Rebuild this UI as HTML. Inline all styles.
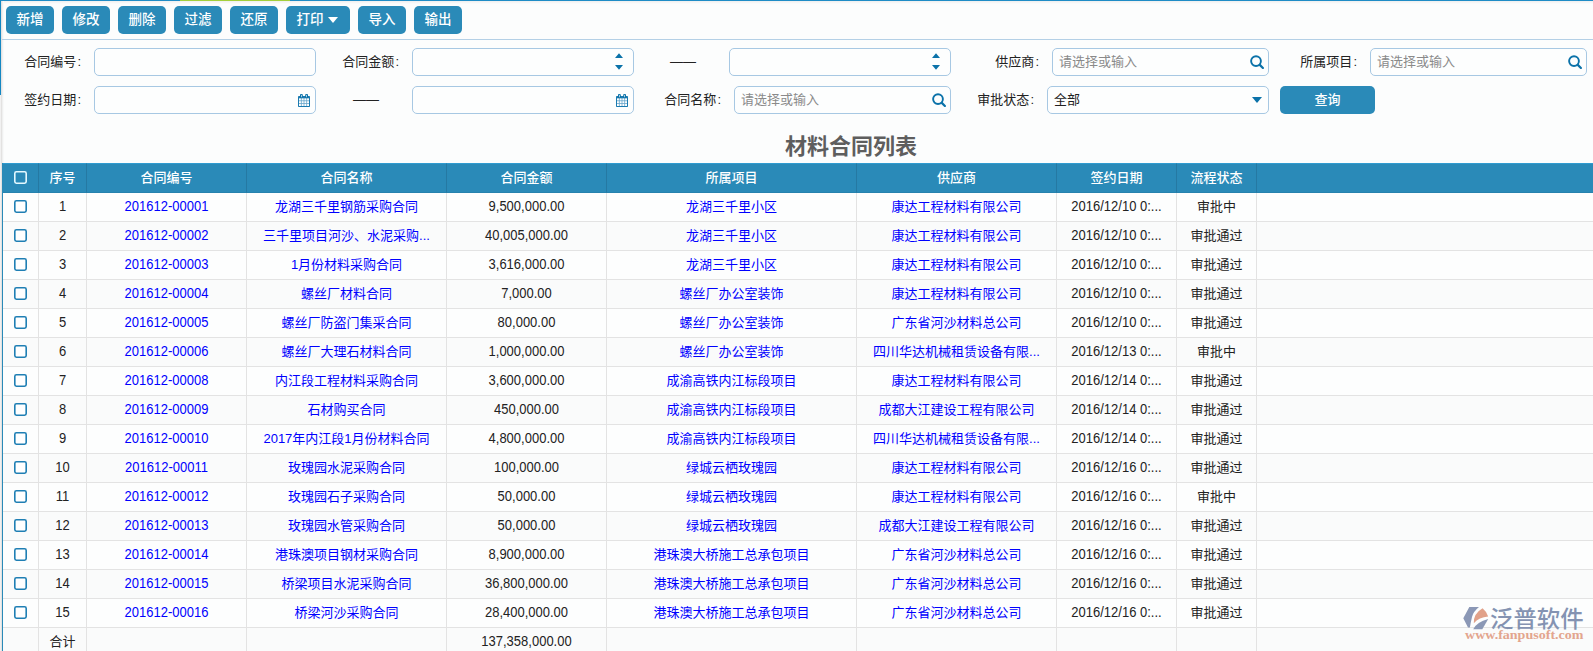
<!DOCTYPE html>
<html lang="zh-CN">
<head>
<meta charset="utf-8">
<title>材料合同列表</title>
<style>
*{box-sizing:border-box;margin:0;padding:0}
html,body{width:1593px;height:651px;overflow:hidden;background:#fcfdfd}
body{font-family:"Liberation Sans","Noto Sans CJK SC",sans-serif;font-size:13px;color:#222;position:relative}
.abs{position:absolute}
#topline{left:0;top:0;width:1593px;height:1px;background:#1f8cc6}
#topgreen{left:180px;top:0;width:110px;height:1px;background:#a4cf3c}
#leftblue{left:0;top:0;width:1px;height:95px;background:#1487c2}
#leftgrey{left:0;top:95px;width:1px;height:556px;background:#f1f1f1}
#leftgrey2{left:1px;top:1px;width:3px;height:650px;background:linear-gradient(90deg,#e3e2e1 0,#e3e2e1 33%,#eff0f0 34%,#eff0f0 66%,#f8f9f9 67%)}
#topshade{left:1px;top:1px;width:1592px;height:3px;background:linear-gradient(180deg,#efefef,#fcfdfd)}
#tblleft{left:2px;top:163px;width:1px;height:488px;background:#2a8ab8}
#tbsep{left:2px;top:39px;width:1591px;height:1px;background:#b4d0e6}
.btn{font-weight:500;position:absolute;top:6px;height:28px;width:48px;background:#2a8ab8;color:#fff;border-radius:5px;font-size:13.5px;line-height:27px;text-align:center;white-space:nowrap}
.lbl i{font-style:normal;margin-left:1px}
.lbl{position:absolute;height:28px;line-height:28px;font-size:13px;color:#222;text-align:right;white-space:nowrap}
.inp{position:absolute;height:28px;border:1px solid #a7c8e3;border-radius:5px;background:#fdfefe;font-size:13px;line-height:26px;color:#8a8a8a;padding-left:6px;white-space:nowrap}
.dash{position:absolute;width:26px;height:28px;line-height:28px;font-size:13px;color:#222;white-space:nowrap;text-align:center}
#title{left:600px;top:132px;width:502px;height:30px;line-height:30px;text-align:center;font-size:22px;font-weight:bold;color:#5e5e5e}
table{position:absolute;left:3px;top:163px;border-collapse:separate;border-spacing:0;table-layout:fixed;width:1590px}
th{height:30px;background:#2a8ab8;color:#fff;font-weight:500;border-top:1px solid #2f9bd0;border-bottom:1px solid #2682ae;font-size:13px;border-right:1px solid #2579a3;text-align:center;white-space:nowrap;padding:0 0 3px 0}
td{height:29px;border-right:1px solid #e3e3e3;border-bottom:1px solid #e3e3e3;text-align:center;font-size:13px;color:#222;white-space:nowrap;overflow:hidden;padding:0 0 4px 0;background:#fdfefe}
tr.alt td{background:#fafbfb}
td.lk{color:#0000ff}
td .n{display:inline-block;transform:translateY(0.7px) scaleY(1.12);transform-origin:50% 55%}
th:last-child,td:last-child{border-right:none}
.cb{display:inline-block;vertical-align:middle;position:relative;left:0.4px}
</style>
</head>
<body>
<div class="abs" id="topline"></div>
<div class="abs" id="topgreen"></div>
<div class="abs" id="leftblue"></div>
<div class="abs" id="topshade"></div>
<div class="abs" id="leftgrey2"></div>
<div class="abs" id="leftgrey"></div>
<div class="abs" id="tbsep"></div>

<div class="btn" style="left:6px">新增</div>
<div class="btn" style="left:62px">修改</div>
<div class="btn" style="left:118px">删除</div>
<div class="btn" style="left:174px">过滤</div>
<div class="btn" style="left:230px">还原</div>
<div class="btn" style="left:286px;width:64px;text-align:left;padding-left:10.5px">打印<svg width="10" height="6" viewBox="0 0 10 6" style="position:absolute;left:42px;top:11px"><path d="M0 0h10L5 6z" fill="#fff"/></svg></div>
<div class="btn" style="left:358px">导入</div>
<div class="btn" style="left:414px">输出</div>

<div class="lbl" style="left:-19px;width:100px;top:48px">合同编号<i>:</i></div>
<div class="inp" style="left:94px;top:48px;width:222px"></div>
<div class="lbl" style="left:299px;width:100px;top:48px">合同金额<i>:</i></div>
<div class="inp" style="left:412px;top:48px;width:222px"><svg class="abs spn" style="right:10.3px;top:4px" width="8" height="18" viewBox="0 0 8 18"><path d="M4 0.3L8 4.9H0z M4 16.7L8 12H0z" fill="#0b72a9"/></svg></div>
<div class="dash" style="left:670px;top:48px">——</div>
<div class="inp" style="left:729px;top:48px;width:222px"><svg class="abs spn" style="right:10.3px;top:4px" width="8" height="18" viewBox="0 0 8 18"><path d="M4 0.3L8 4.9H0z M4 16.7L8 12H0z" fill="#0b72a9"/></svg></div>
<div class="lbl" style="left:939px;width:100px;top:48px">供应商<i>:</i></div>
<div class="inp" style="left:1052px;top:48px;width:217px">请选择或输入<svg class="abs mag" style="right:4px;top:6px" width="14" height="14" viewBox="0 0 14 14"><circle cx="6" cy="6.1" r="4.9" fill="none" stroke="#0b72a9" stroke-width="1.9"/><path d="M9.8 9.9L12.9 13" stroke="#0b72a9" stroke-width="2.2" stroke-linecap="round"/></svg></div>
<div class="lbl" style="left:1257px;width:100px;top:48px">所属项目<i>:</i></div>
<div class="inp" style="left:1370px;top:48px;width:217px">请选择或输入<svg class="abs mag" style="right:4px;top:6px" width="14" height="14" viewBox="0 0 14 14"><circle cx="6" cy="6.1" r="4.9" fill="none" stroke="#0b72a9" stroke-width="1.9"/><path d="M9.8 9.9L12.9 13" stroke="#0b72a9" stroke-width="2.2" stroke-linecap="round"/></svg></div>

<div class="lbl" style="left:-19px;width:100px;top:86px">签约日期<i>:</i></div>
<div class="inp" style="left:94px;top:86px;width:222px"><svg class="abs cal" style="right:5px;top:7px" width="12" height="13" viewBox="0 0 12 13"><rect x="0" y="2" width="12" height="11" rx="0.8" fill="#1a7ab0"/><rect x="2" y="0" width="2.8" height="4" rx="0.9" fill="#0b72a9"/><rect x="7.2" y="0" width="2.8" height="4" rx="0.9" fill="#0b72a9"/><rect x="3" y="0.9" width="0.8" height="2.3" fill="#cfe3f0"/><rect x="8.2" y="0.9" width="0.8" height="2.3" fill="#cfe3f0"/><rect x="1" y="4.4" width="10" height="7.6" fill="#6aa7cc"/><rect x="1.00" y="4.40" width="1.9" height="2.0" fill="#fdfefe"/><rect x="3.70" y="4.40" width="1.9" height="2.0" fill="#fdfefe"/><rect x="6.40" y="4.40" width="1.9" height="2.0" fill="#fdfefe"/><rect x="9.10" y="4.40" width="1.9" height="2.0" fill="#fdfefe"/><rect x="1.00" y="7.20" width="1.9" height="2.0" fill="#fdfefe"/><rect x="3.70" y="7.20" width="1.9" height="2.0" fill="#fdfefe"/><rect x="6.40" y="7.20" width="1.9" height="2.0" fill="#fdfefe"/><rect x="9.10" y="7.20" width="1.9" height="2.0" fill="#fdfefe"/><rect x="1.00" y="10.00" width="1.9" height="2.0" fill="#fdfefe"/><rect x="3.70" y="10.00" width="1.9" height="2.0" fill="#fdfefe"/><rect x="6.40" y="10.00" width="1.9" height="2.0" fill="#fdfefe"/><rect x="9.10" y="10.00" width="1.9" height="2.0" fill="#fdfefe"/></svg></div>
<div class="dash" style="left:353px;top:86px">——</div>
<div class="inp" style="left:412px;top:86px;width:222px"><svg class="abs cal" style="right:5px;top:7px" width="12" height="13" viewBox="0 0 12 13"><rect x="0" y="2" width="12" height="11" rx="0.8" fill="#1a7ab0"/><rect x="2" y="0" width="2.8" height="4" rx="0.9" fill="#0b72a9"/><rect x="7.2" y="0" width="2.8" height="4" rx="0.9" fill="#0b72a9"/><rect x="3" y="0.9" width="0.8" height="2.3" fill="#cfe3f0"/><rect x="8.2" y="0.9" width="0.8" height="2.3" fill="#cfe3f0"/><rect x="1" y="4.4" width="10" height="7.6" fill="#6aa7cc"/><rect x="1.00" y="4.40" width="1.9" height="2.0" fill="#fdfefe"/><rect x="3.70" y="4.40" width="1.9" height="2.0" fill="#fdfefe"/><rect x="6.40" y="4.40" width="1.9" height="2.0" fill="#fdfefe"/><rect x="9.10" y="4.40" width="1.9" height="2.0" fill="#fdfefe"/><rect x="1.00" y="7.20" width="1.9" height="2.0" fill="#fdfefe"/><rect x="3.70" y="7.20" width="1.9" height="2.0" fill="#fdfefe"/><rect x="6.40" y="7.20" width="1.9" height="2.0" fill="#fdfefe"/><rect x="9.10" y="7.20" width="1.9" height="2.0" fill="#fdfefe"/><rect x="1.00" y="10.00" width="1.9" height="2.0" fill="#fdfefe"/><rect x="3.70" y="10.00" width="1.9" height="2.0" fill="#fdfefe"/><rect x="6.40" y="10.00" width="1.9" height="2.0" fill="#fdfefe"/><rect x="9.10" y="10.00" width="1.9" height="2.0" fill="#fdfefe"/></svg></div>
<div class="lbl" style="left:621px;width:100px;top:86px">合同名称<i>:</i></div>
<div class="inp" style="left:734px;top:86px;width:217px">请选择或输入<svg class="abs mag" style="right:4px;top:6px" width="14" height="14" viewBox="0 0 14 14"><circle cx="6" cy="6.1" r="4.9" fill="none" stroke="#0b72a9" stroke-width="1.9"/><path d="M9.8 9.9L12.9 13" stroke="#0b72a9" stroke-width="2.2" stroke-linecap="round"/></svg></div>
<div class="lbl" style="left:934px;width:100px;top:86px">审批状态<i>:</i></div>
<div class="inp" style="left:1047px;top:86px;width:222px;color:#222">全部<svg class="abs" style="right:6px;top:10px" width="10" height="6" viewBox="0 0 10 6"><path d="M0 0h10L5 6z" fill="#0b72a9"/></svg></div>
<div class="btn" style="left:1280px;top:86px;width:95px;height:28px;line-height:27px;font-size:13px">查询</div>

<div class="abs" id="title">材料合同列表</div>

<table>
<colgroup><col style="width:36px"><col style="width:48px"><col style="width:160px"><col style="width:200px"><col style="width:160px"><col style="width:250px"><col style="width:200px"><col style="width:120px"><col style="width:80px"><col></colgroup>
<thead><tr><th><svg class="cb" width="13" height="13" viewBox="0 0 13 13"><rect x="0.8" y="0.8" width="11.4" height="11.400" rx="1.6" fill="none" stroke="#e4f9ff" stroke-width="1.600"/></svg></th><th>序号</th><th>合同编号</th><th>合同名称</th><th>合同金额</th><th>所属项目</th><th>供应商</th><th>签约日期</th><th>流程状态</th><th></th></tr></thead>
<tbody>
<tr><td><svg class="cb" width="13" height="13" viewBox="0 0 13 13"><rect x="0.8" y="0.8" width="11.4" height="11.400" rx="1.6" fill="#fff" stroke="#1f7fb4" stroke-width="1.600"/></svg></td><td><span class="n">1</span></td><td class="lk"><span class="n">201612-00001</span></td><td class="lk">龙湖三千里钢筋采购合同</td><td><span class="n">9,500,000.00</span></td><td class="lk">龙湖三千里小区</td><td class="lk">康达工程材料有限公司</td><td><span class="n">2016/12/10 0:...</span></td><td>审批中</td><td></td></tr>
<tr class="alt"><td><svg class="cb" width="13" height="13" viewBox="0 0 13 13"><rect x="0.8" y="0.8" width="11.4" height="11.400" rx="1.6" fill="#fff" stroke="#1f7fb4" stroke-width="1.600"/></svg></td><td><span class="n">2</span></td><td class="lk"><span class="n">201612-00002</span></td><td class="lk">三千里项目河沙、水泥采购...</td><td><span class="n">40,005,000.00</span></td><td class="lk">龙湖三千里小区</td><td class="lk">康达工程材料有限公司</td><td><span class="n">2016/12/10 0:...</span></td><td>审批通过</td><td></td></tr>
<tr><td><svg class="cb" width="13" height="13" viewBox="0 0 13 13"><rect x="0.8" y="0.8" width="11.4" height="11.400" rx="1.6" fill="#fff" stroke="#1f7fb4" stroke-width="1.600"/></svg></td><td><span class="n">3</span></td><td class="lk"><span class="n">201612-00003</span></td><td class="lk">1月份材料采购合同</td><td><span class="n">3,616,000.00</span></td><td class="lk">龙湖三千里小区</td><td class="lk">康达工程材料有限公司</td><td><span class="n">2016/12/10 0:...</span></td><td>审批通过</td><td></td></tr>
<tr class="alt"><td><svg class="cb" width="13" height="13" viewBox="0 0 13 13"><rect x="0.8" y="0.8" width="11.4" height="11.400" rx="1.6" fill="#fff" stroke="#1f7fb4" stroke-width="1.600"/></svg></td><td><span class="n">4</span></td><td class="lk"><span class="n">201612-00004</span></td><td class="lk">螺丝厂材料合同</td><td><span class="n">7,000.00</span></td><td class="lk">螺丝厂办公室装饰</td><td class="lk">康达工程材料有限公司</td><td><span class="n">2016/12/10 0:...</span></td><td>审批通过</td><td></td></tr>
<tr><td><svg class="cb" width="13" height="13" viewBox="0 0 13 13"><rect x="0.8" y="0.8" width="11.4" height="11.400" rx="1.6" fill="#fff" stroke="#1f7fb4" stroke-width="1.600"/></svg></td><td><span class="n">5</span></td><td class="lk"><span class="n">201612-00005</span></td><td class="lk">螺丝厂防盗门集采合同</td><td><span class="n">80,000.00</span></td><td class="lk">螺丝厂办公室装饰</td><td class="lk">广东省河沙材料总公司</td><td><span class="n">2016/12/10 0:...</span></td><td>审批通过</td><td></td></tr>
<tr class="alt"><td><svg class="cb" width="13" height="13" viewBox="0 0 13 13"><rect x="0.8" y="0.8" width="11.4" height="11.400" rx="1.6" fill="#fff" stroke="#1f7fb4" stroke-width="1.600"/></svg></td><td><span class="n">6</span></td><td class="lk"><span class="n">201612-00006</span></td><td class="lk">螺丝厂大理石材料合同</td><td><span class="n">1,000,000.00</span></td><td class="lk">螺丝厂办公室装饰</td><td class="lk">四川华达机械租赁设备有限...</td><td><span class="n">2016/12/13 0:...</span></td><td>审批中</td><td></td></tr>
<tr><td><svg class="cb" width="13" height="13" viewBox="0 0 13 13"><rect x="0.8" y="0.8" width="11.4" height="11.400" rx="1.6" fill="#fff" stroke="#1f7fb4" stroke-width="1.600"/></svg></td><td><span class="n">7</span></td><td class="lk"><span class="n">201612-00008</span></td><td class="lk">内江段工程材料采购合同</td><td><span class="n">3,600,000.00</span></td><td class="lk">成渝高铁内江标段项目</td><td class="lk">康达工程材料有限公司</td><td><span class="n">2016/12/14 0:...</span></td><td>审批通过</td><td></td></tr>
<tr class="alt"><td><svg class="cb" width="13" height="13" viewBox="0 0 13 13"><rect x="0.8" y="0.8" width="11.4" height="11.400" rx="1.6" fill="#fff" stroke="#1f7fb4" stroke-width="1.600"/></svg></td><td><span class="n">8</span></td><td class="lk"><span class="n">201612-00009</span></td><td class="lk">石材购买合同</td><td><span class="n">450,000.00</span></td><td class="lk">成渝高铁内江标段项目</td><td class="lk">成都大江建设工程有限公司</td><td><span class="n">2016/12/14 0:...</span></td><td>审批通过</td><td></td></tr>
<tr><td><svg class="cb" width="13" height="13" viewBox="0 0 13 13"><rect x="0.8" y="0.8" width="11.4" height="11.400" rx="1.6" fill="#fff" stroke="#1f7fb4" stroke-width="1.600"/></svg></td><td><span class="n">9</span></td><td class="lk"><span class="n">201612-00010</span></td><td class="lk">2017年内江段1月份材料合同</td><td><span class="n">4,800,000.00</span></td><td class="lk">成渝高铁内江标段项目</td><td class="lk">四川华达机械租赁设备有限...</td><td><span class="n">2016/12/14 0:...</span></td><td>审批通过</td><td></td></tr>
<tr class="alt"><td><svg class="cb" width="13" height="13" viewBox="0 0 13 13"><rect x="0.8" y="0.8" width="11.4" height="11.400" rx="1.6" fill="#fff" stroke="#1f7fb4" stroke-width="1.600"/></svg></td><td><span class="n">10</span></td><td class="lk"><span class="n">201612-00011</span></td><td class="lk">玫瑰园水泥采购合同</td><td><span class="n">100,000.00</span></td><td class="lk">绿城云栖玫瑰园</td><td class="lk">康达工程材料有限公司</td><td><span class="n">2016/12/16 0:...</span></td><td>审批通过</td><td></td></tr>
<tr><td><svg class="cb" width="13" height="13" viewBox="0 0 13 13"><rect x="0.8" y="0.8" width="11.4" height="11.400" rx="1.6" fill="#fff" stroke="#1f7fb4" stroke-width="1.600"/></svg></td><td><span class="n">11</span></td><td class="lk"><span class="n">201612-00012</span></td><td class="lk">玫瑰园石子采购合同</td><td><span class="n">50,000.00</span></td><td class="lk">绿城云栖玫瑰园</td><td class="lk">康达工程材料有限公司</td><td><span class="n">2016/12/16 0:...</span></td><td>审批中</td><td></td></tr>
<tr class="alt"><td><svg class="cb" width="13" height="13" viewBox="0 0 13 13"><rect x="0.8" y="0.8" width="11.4" height="11.400" rx="1.6" fill="#fff" stroke="#1f7fb4" stroke-width="1.600"/></svg></td><td><span class="n">12</span></td><td class="lk"><span class="n">201612-00013</span></td><td class="lk">玫瑰园水管采购合同</td><td><span class="n">50,000.00</span></td><td class="lk">绿城云栖玫瑰园</td><td class="lk">成都大江建设工程有限公司</td><td><span class="n">2016/12/16 0:...</span></td><td>审批通过</td><td></td></tr>
<tr><td><svg class="cb" width="13" height="13" viewBox="0 0 13 13"><rect x="0.8" y="0.8" width="11.4" height="11.400" rx="1.6" fill="#fff" stroke="#1f7fb4" stroke-width="1.600"/></svg></td><td><span class="n">13</span></td><td class="lk"><span class="n">201612-00014</span></td><td class="lk">港珠澳项目钢材采购合同</td><td><span class="n">8,900,000.00</span></td><td class="lk">港珠澳大桥施工总承包项目</td><td class="lk">广东省河沙材料总公司</td><td><span class="n">2016/12/16 0:...</span></td><td>审批通过</td><td></td></tr>
<tr class="alt"><td><svg class="cb" width="13" height="13" viewBox="0 0 13 13"><rect x="0.8" y="0.8" width="11.4" height="11.400" rx="1.6" fill="#fff" stroke="#1f7fb4" stroke-width="1.600"/></svg></td><td><span class="n">14</span></td><td class="lk"><span class="n">201612-00015</span></td><td class="lk">桥梁项目水泥采购合同</td><td><span class="n">36,800,000.00</span></td><td class="lk">港珠澳大桥施工总承包项目</td><td class="lk">广东省河沙材料总公司</td><td><span class="n">2016/12/16 0:...</span></td><td>审批通过</td><td></td></tr>
<tr><td><svg class="cb" width="13" height="13" viewBox="0 0 13 13"><rect x="0.8" y="0.8" width="11.4" height="11.400" rx="1.6" fill="#fff" stroke="#1f7fb4" stroke-width="1.600"/></svg></td><td><span class="n">15</span></td><td class="lk"><span class="n">201612-00016</span></td><td class="lk">桥梁河沙采购合同</td><td><span class="n">28,400,000.00</span></td><td class="lk">港珠澳大桥施工总承包项目</td><td class="lk">广东省河沙材料总公司</td><td><span class="n">2016/12/16 0:...</span></td><td>审批通过</td><td></td></tr>
<tr class="alt"><td></td><td>合计</td><td></td><td></td><td><span class="n">137,358,000.00</span></td><td></td><td></td><td></td><td></td><td></td></tr>
</tbody>
</table>
<div class="abs" id="tblleft"></div>

<div class="abs" id="logo" style="left:1462px;top:603px;width:125px;height:42px">
<svg width="125" height="42" viewBox="0 0 125 42">
<path d="M7.300 4.100H17Q11 9 10 14Q8.600 20 7.900 24.400H6L1.300 15.300Z" fill="#8b98b6"/>
<path d="M20.600 5.300Q24.500 8.500 26.200 13.600Q17 14.500 11.800 20.200Q11.500 10.500 20.600 5.300Z" fill="#e1a189"/>
<path d="M26.200 16.100L20.300 26.300H11.200Q15 19 26.200 16.100Z" fill="#8b98b6"/>
<text x="28" y="24" font-family="'Liberation Sans','Noto Sans CJK SC',sans-serif" font-size="23" font-weight="500" fill="#8493b2" textLength="93.500" lengthAdjust="spacingAndGlyphs">泛普软件</text>
<text x="3" y="36" font-family="'Liberation Serif',serif" font-size="12" font-weight="bold" fill="#e3a58e" textLength="118.500" lengthAdjust="spacingAndGlyphs">www.fanpusoft.com</text>
</svg>
</div>
</body>
</html>
